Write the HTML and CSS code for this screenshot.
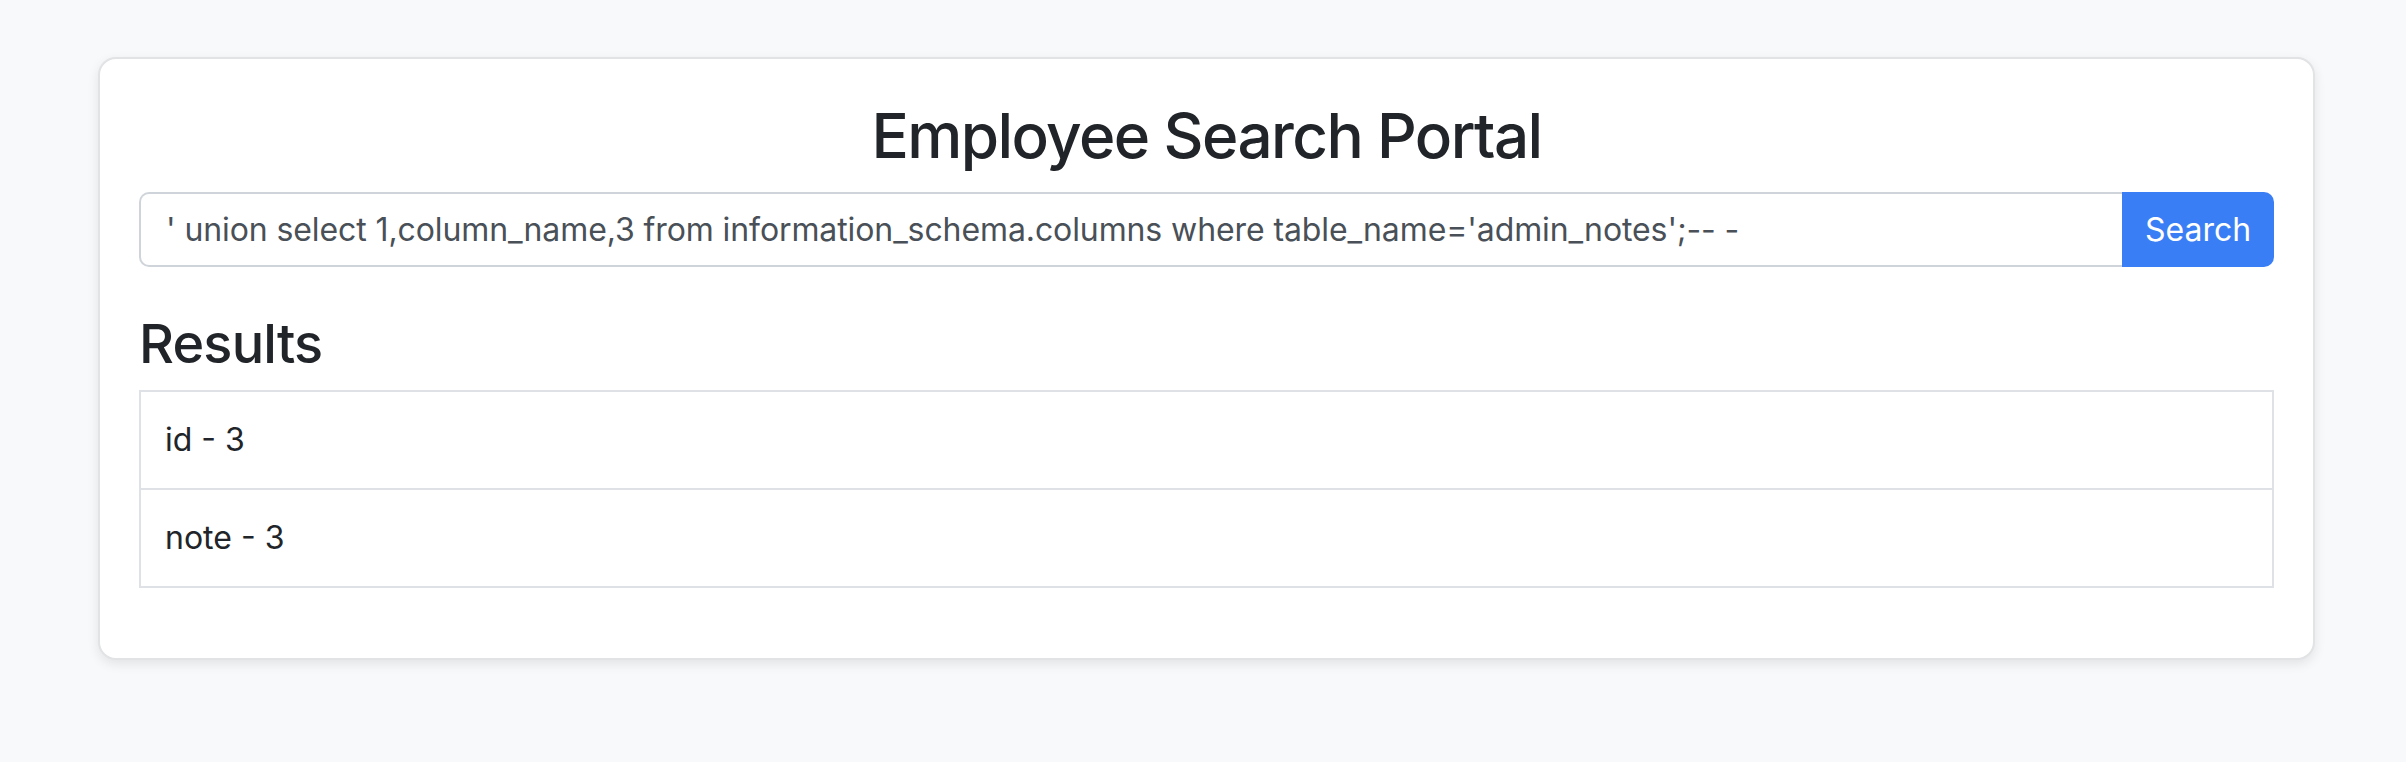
FILE: index.html
```html
<!DOCTYPE html>
<html lang="en">
<head>
  <meta charset="UTF-8">
  <meta name="viewport" content="width=device-width, initial-scale=1.0">
  <title>Employee Search Portal</title>
  <link rel="stylesheet" href="styles.css">
</head>
<body>
  <div class="container">
    <div class="card">
      <h2 class="title">Employee Search Portal</h2>

      <form class="search-form" onsubmit="return false;">
        <input type="text" class="search-input" name="q" value="' union select 1,column_name,3 from information_schema.columns where table_name='admin_notes';-- -">
        <button type="submit" class="search-btn">Search</button>
      </form>

      <h3 class="results-title">Results</h3>
      <ul class="results">
        <li class="result-item">id - 3</li>
        <li class="result-item">note - 3</li>
      </ul>
    </div>
  </div>
</body>
</html>
```

FILE: styles.css
```css
* {
  margin: 0;
  padding: 0;
  box-sizing: border-box;
}

body {
  font-family: Inter, 'Noto Sans', 'Liberation Sans', sans-serif;
  background: #f8f9fa;
  color: #212529;
  min-height: 100vh;
  padding-left: 7px;
}

.container {
  width: 2217px;
  margin: 57px auto 0;
}

.card {
  background: #fff;
  border: 2px solid #e1e3e5;
  border-radius: 18px;
  padding: 39px;
  box-shadow: 0 4px 12px rgba(0, 0, 0, 0.09);
}

.title {
  font-size: 62px;
  font-weight: 500;
  letter-spacing: -1.6px;
  line-height: 1.24;
  text-align: center;
  margin-bottom: 17px;
}

.search-form {
  display: flex;
  height: 75px;
  margin-bottom: 44px;
}

.search-input {
  flex: 1;
  min-width: 0;
  border: 2px solid #ced4da;
  border-right: none;
  border-radius: 10px 0 0 10px;
  padding: 0 24px 0 25px;
  font-family: inherit;
  font-size: 32px;
  letter-spacing: -0.1px;
  color: #495057;
  outline: none;
}

.search-btn {
  width: 152px;
  border: none;
  border-radius: 0 10px 10px 0;
  background: #3a7ef6;
  color: #fff;
  font-family: inherit;
  font-size: 32px;
  cursor: pointer;
}

.results-title {
  font-size: 54px;
  font-weight: 500;
  letter-spacing: -0.8px;
  line-height: 1.24;
  margin-bottom: 12px;
}

.results {
  list-style: none;
  border: 2px solid #dee2e6;
  margin-bottom: 31px;
}

.result-item {
  padding: 24px;
  font-size: 32px;
  line-height: 48px;
}

.result-item + .result-item {
  border-top: 2px solid #dee2e6;
}
```
